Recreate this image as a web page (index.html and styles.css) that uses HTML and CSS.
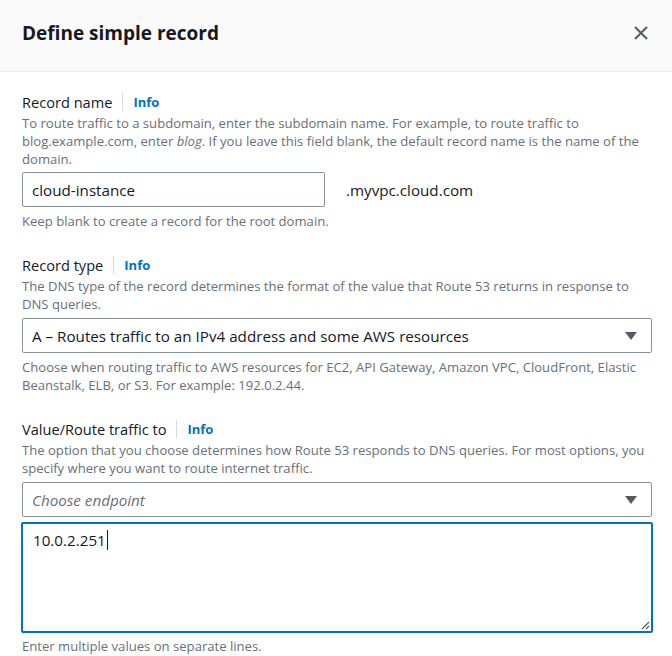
FILE: index.html
```html
<!DOCTYPE html>
<html>
<head>
<meta charset="utf-8">
<link rel="stylesheet" href="styles.css">
</head>
<body>
<div class="modal">
  <div class="header">
    <h2 class="title">Define simple record</h2>
    <svg class="close" width="16" height="16" viewBox="0 0 16 16"><path d="M2 2 L14 14 M14 2 L2 14" stroke="#545b64" stroke-width="2" fill="none"/></svg>
  </div>
  <div class="body">
    <div class="field">
      <div class="label-row"><span class="label">Record name</span><span class="info">Info</span></div>
      <div class="desc">To route traffic to a subdomain, enter the subdomain name. For example, to route traffic to<br>blog.example.com, enter <i>blog</i>. If you leave this field blank, the default record name is the name of the<br>domain.</div>
      <div class="name-row">
        <div class="input">cloud-instance</div>
        <span class="suffix">.myvpc.cloud.com</span>
      </div>
      <div class="hint">Keep blank to create a record for the root domain.</div>
    </div>

    <div class="field">
      <div class="label-row"><span class="label">Record type</span><span class="info">Info</span></div>
      <div class="desc">The DNS type of the record determines the format of the value that Route 53 returns in response to<br>DNS queries.</div>
      <div class="select"><span>A – Routes traffic to an IPv4 address and some AWS resources</span><span class="caret"></span></div>
      <div class="hint">Choose when routing traffic to AWS resources for EC2, API Gateway, Amazon VPC, CloudFront, Elastic<br>Beanstalk, ELB, or S3. For example: 192.0.2.44.</div>
    </div>

    <div class="field">
      <div class="label-row"><span class="label">Value/Route traffic to</span><span class="info">Info</span></div>
      <div class="desc">The option that you choose determines how Route 53 responds to DNS queries. For most options, you<br>specify where you want to route internet traffic.</div>
      <div class="select"><span class="placeholder">Choose endpoint</span><span class="caret"></span></div>
      <div class="textarea"><span>10.0.2.251</span><span class="cursor"></span>
        <svg class="grip" width="10" height="10" viewBox="0 0 10 10"><path d="M9 2 L2 9 M9 6 L6 9" stroke="#545b64" stroke-width="1.2" fill="none"/></svg>
      </div>
      <div class="hint">Enter multiple values on separate lines.</div>
    </div>
  </div>
</div>
</body>
</html>
```

FILE: styles.css
```css
* { box-sizing: border-box; }
html, body { margin: 0; padding: 0; background: #fff; }
body {
  font-family: "Open Sans", "Noto Sans", sans-serif;
  color: #16191f;
  width: 672px;
  height: 656px;
  overflow: hidden;
}
.modal { width: 672px; }
.header {
  height: 72px;
  background: #fafafa;
  border-bottom: 1px solid #eaeded;
  display: flex;
  align-items: center;
  justify-content: space-between;
  padding: 0 22px 0 22px;
}
.title {
  margin: 0;
  font-size: 19px;
  font-weight: 700;
  color: #16191f;
  letter-spacing: 0;
  padding-bottom: 6px;
}
.close { margin-right: 1px; margin-bottom: 5px; }
.body { padding: 19px 20px 0 22px; }
.field { margin-bottom: 24px; }
.label-row { display: flex; align-items: center; height: 22px; }
.label { font-size: 14.6px; color: #16191f; }
.info {
  font-size: 13px;
  font-weight: 700;
  color: #0073bb;
  border-left: 1px solid #d5dbdb;
  margin-left: 10px;
  padding-left: 10px;
  line-height: 18px;
}
.desc, .hint {
  font-size: 13.1px;
  line-height: 18px;
  color: #687078;
}
.desc { margin-top: 1px; }
.name-row { display: flex; align-items: center; margin-top: 4px; }
.input {
  width: 303px;
  height: 35px;
  border: 1px solid #879596;
  border-radius: 2px;
  padding: 0 9px;
  display: flex;
  align-items: center;
  font-size: 15.2px;
  color: #16191f;
}
.suffix { margin-left: 21px; font-size: 15.2px; color: #16191f; }
.hint { margin-top: 5px; }
.select {
  margin-top: 5px;
  width: 630px;
  height: 35px;
  border: 1px solid #879596;
  border-radius: 2px;
  padding: 0 12px 0 9px;
  display: flex;
  align-items: center;
  justify-content: space-between;
  font-size: 15.2px;
  color: #16191f;
}
.placeholder { font-style: italic; color: #687078; }
.caret {
  width: 0; height: 0;
  border-left: 6px solid transparent;
  border-right: 6px solid transparent;
  border-top: 8px solid #545b64;
  margin-right: 2px;
}
.textarea {
  position: relative;
  margin-top: 5px;
  margin-left: -1px;
  width: 632px;
  height: 111px;
  border: 2px solid #0073bb;
  border-radius: 2px;
  padding: 6px 9px 6px 10px;
  font-size: 15.2px;
  line-height: 21px;
  color: #16191f;
  display: flex;
  align-items: flex-start;
}
.textarea + .hint { margin-top: 4px; }
.cursor { display: inline-block; width: 1px; height: 20px; background: #16191f; margin-top: 0; margin-left: 1px; }
.grip { position: absolute; right: 1px; bottom: 1px; }
```
